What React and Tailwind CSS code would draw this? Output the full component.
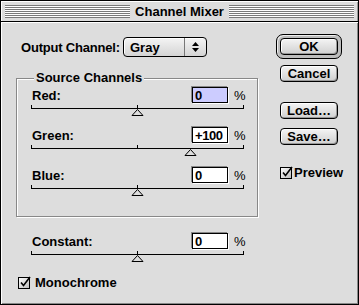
const stripes =
  'flex-1 h-[13px] bg-[repeating-linear-gradient(to_bottom,#7a7a7a_0px,#7a7a7a_1px,#ffffff_1px,#ffffff_2px)]';

function Slider({ pos }) {
  // pos in px from the left end of the track (0..212)
  return (
    <svg width="213" height="12" className="block mt-[1px]">
      <path d="M0.5 1v4M212.5 1v4M106.5 1v4M0 4.5h213" stroke="#000" strokeWidth="1" fill="none" />
      <path d={`M${pos + 0.5} 5.5 L${pos + 6} 11.5 L${pos - 5} 11.5 Z`} fill="#dddddd" stroke="#000" strokeWidth="1" />
    </svg>
  );
}

function Check() {
  return (
    <svg width="13" height="13" className="block shrink-0">
      <defs>
        <linearGradient id="cb" x1="0" y1="0" x2="1" y2="1">
          <stop offset="0" stopColor="#ffffff" />
          <stop offset="1" stopColor="#bbbbbb" />
        </linearGradient>
      </defs>
      <rect x="0.5" y="1.5" width="11" height="11" fill="url(#cb)" stroke="#000" />
      <path d="M3 6.5 L5.5 9.5 L12 1" stroke="#000" strokeWidth="1.6" fill="none" />
    </svg>
  );
}

function ChannelRow({ label, value, pos, active, className = '' }) {
  return (
    <div className={`w-[213px] ${className}`}>
      <div className="flex items-center h-[16px]">
        <span className="flex-1 pl-[1px]">{label}</span>
        <div
          className={`w-[36px] h-[16px] border border-black pl-[2px] flex items-center tracking-[-0.4px] overflow-hidden shadow-[-1px_-1px_0_#888,1px_1px_0_#fff] ${
            active ? 'bg-[#ccccff]' : 'bg-white'
          }`}
        >
          {value}
        </div>
        <span className="ml-[6px] w-[10px] font-normal">%</span>
      </div>
      <Slider pos={pos} />
    </div>
  );
}

function Button({ children }) {
  return (
    <div className="w-[58px] h-[17px] rounded-[4px] border border-black bg-[linear-gradient(#f4f4f4,#d0d0d0)] shadow-[inset_1px_1px_0_#fff,inset_-1px_-1px_0_#999] flex items-center justify-center">
      {children}
    </div>
  );
}

export default function App() {
  return (
    <div className="w-[359px] h-[305px] bg-[#dddddd] border border-black flex flex-col font-['Liberation_Sans',Arial,sans-serif] font-bold text-[13px] leading-none text-black select-none">
      {/* title bar */}
      <div className="h-[21px] shrink-0 flex items-center gap-[4px] px-[4px] border-b border-black shadow-[inset_1px_1px_0_#fff,inset_-1px_0_0_#999]">
        <div className={stripes} />
        <span className="px-[1px]">Channel Mixer</span>
        <div className={stripes} />
      </div>

      <div className="flex-1 flex pl-[15px] shadow-[inset_1px_1px_0_#fff,inset_-1px_-1px_0_#888]">
        {/* left column */}
        <div className="w-[242px] pt-[15px] flex flex-col">
          <div className="flex items-center h-[20px]">
            <span className="w-[107px] pl-[5px] tracking-[-0.2px]">Output Channel:</span>
            <div className="w-[84px] h-[20px] rounded-[4px] border border-black bg-[linear-gradient(#f4f4f4,#d4d4d4)] shadow-[inset_1px_1px_0_#fff] flex">
              <span className="flex-1 pl-[6px] flex items-center">Gray</span>
              <div className="w-[22px] border-l border-[#777] flex items-center justify-center">
                <svg width="7" height="10">
                  <path d="M3.5 0 L7 4 L0 4 Z M3.5 10 L7 6 L0 6 Z" fill="#000" />
                </svg>
              </div>
            </div>
          </div>

          <div className="relative mt-[21px] h-[139px] border border-[#888] shadow-[inset_1px_1px_0_#fff,1px_1px_0_#fff] pt-[8px] px-[14px]">
            <span className="absolute left-[17px] top-[-8px] px-[2px] bg-[#dddddd] leading-[14px]">
              Source Channels
            </span>
            <ChannelRow label="Red:" value="0" pos={106} active />
            <ChannelRow label="Green:" value="+100" pos={159} className="mt-[11px]" />
            <ChannelRow label="Blue:" value="0" pos={106} className="mt-[11px]" />
          </div>

          <div className="mt-[16px] pl-[15px]">
            <ChannelRow label="Constant:" value="0" pos={106} />
          </div>

          <div className="mt-[14px] ml-[2px] flex items-center gap-[4px]">
            <Check />
            <span>Monochrome</span>
          </div>
        </div>

        {/* right column */}
        <div className="ml-[18px] w-[66px] pt-[12px] flex flex-col items-center">
          <div className="rounded-[7px] border border-black bg-[#bdbdbd] p-[3px] shadow-[inset_1px_1px_0_#eee]">
            <Button>OK</Button>
          </div>
          <div className="mt-[6px]">
            <Button>Cancel</Button>
          </div>
          <div className="mt-[20px]">
            <Button>Load…</Button>
          </div>
          <div className="mt-[9px]">
            <Button>Save…</Button>
          </div>
          <div className="mt-[21px] self-start ml-[4px] flex items-center gap-[1px]">
            <Check />
            <span>Preview</span>
          </div>
        </div>
      </div>
    </div>
  );
}
